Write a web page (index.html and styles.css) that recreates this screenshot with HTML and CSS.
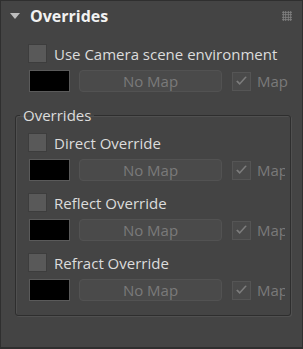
FILE: index.html
```html
<!DOCTYPE html>
<html lang="en">
<head>
    <meta charset="UTF-8">
    <title>Overrides</title>
    <link rel="stylesheet" href="styles.css">
</head>
<body>
    <div class="panel">
        <div class="header">
            <span class="arrow"></span>
            <span class="title">Overrides</span>
            <span class="grip"></span>
        </div>

        <div class="content">
            <div class="check-row">
                <span class="checkbox"></span>
                <span class="label">Use Camera scene environment</span>
            </div>
            <div class="map-row">
                <span class="swatch"></span>
                <span class="map-btn">No Map</span>
                <span class="map-toggle">
                    <span class="checkbox checked"><svg viewBox="0 0 19 19"><path d="M3.5 9.5 L7.5 13.5 L15.5 4.5 L13.8 3.8 L7.5 11 L5.2 8.3 Z"/></svg></span>
                    <span class="map-label">Map</span>
                </span>
            </div>
        </div>

        <fieldset class="group">
            <legend>Overrides</legend>

            <div class="check-row">
                <span class="checkbox"></span>
                <span class="label">Direct Override</span>
            </div>
            <div class="map-row">
                <span class="swatch"></span>
                <span class="map-btn">No Map</span>
                <span class="map-toggle">
                    <span class="checkbox checked"><svg viewBox="0 0 19 19"><path d="M3.5 9.5 L7.5 13.5 L15.5 4.5 L13.8 3.8 L7.5 11 L5.2 8.3 Z"/></svg></span>
                    <span class="map-label">Map</span>
                </span>
            </div>

            <div class="check-row">
                <span class="checkbox"></span>
                <span class="label">Reflect Override</span>
            </div>
            <div class="map-row">
                <span class="swatch"></span>
                <span class="map-btn">No Map</span>
                <span class="map-toggle">
                    <span class="checkbox checked"><svg viewBox="0 0 19 19"><path d="M3.5 9.5 L7.5 13.5 L15.5 4.5 L13.8 3.8 L7.5 11 L5.2 8.3 Z"/></svg></span>
                    <span class="map-label">Map</span>
                </span>
            </div>

            <div class="check-row">
                <span class="checkbox"></span>
                <span class="label">Refract Override</span>
            </div>
            <div class="map-row">
                <span class="swatch"></span>
                <span class="map-btn">No Map</span>
                <span class="map-toggle">
                    <span class="checkbox checked"><svg viewBox="0 0 19 19"><path d="M3.5 9.5 L7.5 13.5 L15.5 4.5 L13.8 3.8 L7.5 11 L5.2 8.3 Z"/></svg></span>
                    <span class="map-label">Map</span>
                </span>
            </div>
        </fieldset>
    </div>
</body>
</html>
```

FILE: styles.css
```css
body {
    margin: 0;
    background: #444444;
    font-family: "Open Sans", "Liberation Sans", sans-serif;
    font-size: 15px;
    color: #dcdcdc;
}
.panel {
    width: 303px;
    height: 349px;
    box-sizing: border-box;
    border: 1px solid #2f2f2f;
    border-bottom-width: 2px;
    background: #444444;
}
.header {
    display: flex;
    align-items: center;
    height: 30px;
    padding-left: 9px;
    padding-right: 10px;
}
.arrow {
    width: 0;
    height: 0;
    border-left: 5px solid transparent;
    border-right: 5px solid transparent;
    border-top: 6px solid #bdbdbd;
    margin-right: 10px;
}
.title {
    font-weight: bold;
    font-size: 16px;
    color: #f2f2f2;
    flex: 1;
}
.grip {
    width: 10px;
    height: 10px;
    background-image: radial-gradient(circle, #8a8a8a 0.9px, transparent 1.1px);
    background-size: 2.5px 2.5px;
    opacity: 0.9;
}
.content {
    padding: 13px 0 0 27px;
}
.check-row {
    display: flex;
    align-items: center;
    height: 19px;
    margin-bottom: 7px;
}
.checkbox {
    width: 17px;
    height: 17px;
    background: #595959;
    border: 1px solid #3d3d3d;
    flex-shrink: 0;
}
.label {
    margin-left: 7px;
    white-space: nowrap;
}
.map-row {
    display: flex;
    align-items: center;
    height: 22px;
}
.swatch {
    width: 39px;
    height: 20px;
    background: #000000;
    border: 1px solid #5a5a5a;
    margin-left: 1px;
}
.map-btn {
    width: 141px;
    height: 20px;
    line-height: 20px;
    margin-left: 9px;
    border: 1px solid #525252;
    border-radius: 4px;
    background: #4a4a4a;
    color: #7a7a7a;
    text-align: center;
}
.map-toggle {
    display: flex;
    align-items: center;
    margin-left: 10px;
    width: 57px;
    overflow: hidden;
}
.group .map-toggle {
    width: 53px;
}
.checkbox.checked {
    background: #4a4a4a;
    border-color: #555555;
}
.checkbox svg {
    display: block;
    width: 17px;
    height: 17px;
    fill: #7d7d7d;
}
.map-label {
    margin-left: 6px;
    color: #7a7a7a;
    white-space: nowrap;
}
.group {
    margin: 13px 11px 0 14px;
    padding: 8px 0 14px 12px;
    border: 1px solid #2e2e2e;
    border-radius: 3px;
    box-shadow: inset 1px 1px 0 #505050, 1px 1px 0 #505050;
}
.group legend {
    padding: 0 3px;
    margin-left: -8px;
    color: #dcdcdc;
}
.group .map-row {
    margin-bottom: 12px;
}
.group .map-row:last-child {
    margin-bottom: 0;
}
```
